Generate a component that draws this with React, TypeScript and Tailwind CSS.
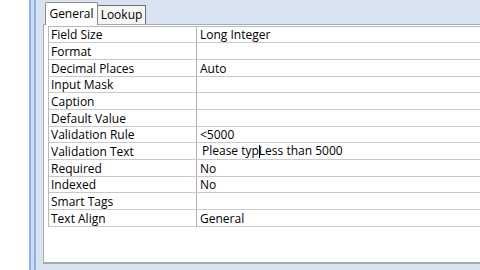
import React from "react";

const rows: { label: string; value: React.ReactNode; h: string }[] = [
  { label: "Field Size", value: "Long Integer", h: "h-[16px]" },
  { label: "Format", value: "", h: "h-[17px]" },
  { label: "Decimal Places", value: "Auto", h: "h-[17px]" },
  { label: "Input Mask", value: "", h: "h-[16px]" },
  { label: "Caption", value: "", h: "h-[17px]" },
  { label: "Default Value", value: "", h: "h-[17px]" },
  { label: "Validation Rule", value: "<5000", h: "h-[16px]" },
  {
    label: "Validation Text",
    value: (
      <span className="pl-[2px]">
        Please typ
        <span className="inline-block w-px h-[13px] bg-black align-middle -mr-px relative"></span>
        Less than 5000
      </span>
    ),
    h: "h-[17px]",
  },
  { label: "Required", value: "No", h: "h-[17px]" },
  { label: "Indexed", value: "No", h: "h-[16px]" },
  { label: "Smart Tags", value: "", h: "h-[17px]" },
  { label: "Text Align", value: "General", h: "h-[17px]" },
];

export default function App() {
  return (
    <div
      className="w-[480px] h-[270px] bg-white flex overflow-hidden text-[12px] text-[#000]"
      style={{ fontFamily: '"Open Sans", "Liberation Sans", sans-serif' }}
    >
      <div className="w-[29px] shrink-0 bg-white" />
      <div className="w-[7px] shrink-0 border-l-2 border-r-2 border-[#8fb0e0] bg-[#c9daf2]" />
      <div className="flex-1 flex flex-col bg-[#d7e3f1] pl-[7px] pb-[6px]">
        {/* tab strip */}
        <div className="h-[24px] shrink-0 flex items-end pl-[2px] relative z-10">
          <div className="h-[23px] w-[53px] bg-white border border-b-0 border-[#8d8d8d] rounded-t-[2px] flex items-center justify-center -mb-px pb-[1px]">
            General
          </div>
          <div className="h-[19px] w-[48px] bg-[#f6f6f6] border border-l-0 border-b-0 border-[#6e6e6e] flex items-center justify-center">
            Lookup
          </div>
        </div>
        {/* panel */}
        <div className="flex-1 bg-white border-t border-l border-b-2 border-[#a9a9a9] pl-[4px] pt-[1px]">
          <div className="border-t border-l border-[#b9b9b9]">
            {rows.map((r) => (
              <div key={r.label} className={`flex border-b border-[#c9c9c9] ${r.h}`}>
                <div className="w-[147px] shrink-0 pl-[2px] pt-[1px] flex items-center leading-none whitespace-nowrap">
                  {r.label}
                </div>
                <div className="flex-1 border-l border-[#b0b0b0] pl-[3px] pt-[1px] flex items-center leading-none whitespace-nowrap">
                  {r.value}
                </div>
              </div>
            ))}
          </div>
        </div>
      </div>
    </div>
  );
}
